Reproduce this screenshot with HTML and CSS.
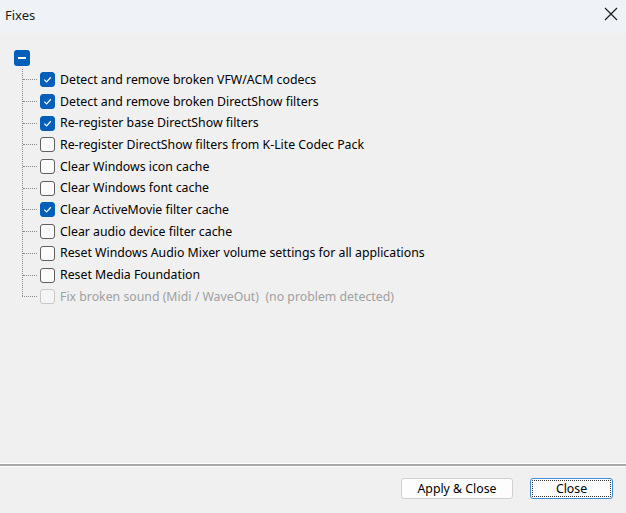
FILE: index.html
```html
<!DOCTYPE html>
<html>
<head>
<meta charset="utf-8">
<link rel="stylesheet" href="styles.css">
</head>
<body>
<div class="window">
  <div class="titlebar">
    <span class="title">Fixes</span>
    <span class="close-x">
      <svg width="14" height="14" viewBox="0 0 14 14"><path d="M1 1 L13 13 M13 1 L1 13" stroke="#1a1a1a" stroke-width="1.2" fill="none"/></svg>
    </span>
  </div>
  <div class="content">
    <div class="tree">
      <div class="root-row"><span class="root-box"><span class="minus"></span></span></div>
      <div class="children">
        <div class="row"><span class="branch"></span><span class="cb checked"><svg viewBox="0 0 14 14"><path d="M3.5 7.2 L6 9.6 L10.6 4.6" stroke="#fff" stroke-width="1.3" fill="none"/></svg></span><span class="label">Detect and remove broken VFW/ACM codecs</span></div>
        <div class="row"><span class="branch"></span><span class="cb checked"><svg viewBox="0 0 14 14"><path d="M3.5 7.2 L6 9.6 L10.6 4.6" stroke="#fff" stroke-width="1.3" fill="none"/></svg></span><span class="label">Detect and remove broken DirectShow filters</span></div>
        <div class="row"><span class="branch"></span><span class="cb checked"><svg viewBox="0 0 14 14"><path d="M3.5 7.2 L6 9.6 L10.6 4.6" stroke="#fff" stroke-width="1.3" fill="none"/></svg></span><span class="label">Re-register base DirectShow filters</span></div>
        <div class="row"><span class="branch"></span><span class="cb"></span><span class="label">Re-register DirectShow filters from K-Lite Codec Pack</span></div>
        <div class="row"><span class="branch"></span><span class="cb"></span><span class="label">Clear Windows icon cache</span></div>
        <div class="row"><span class="branch"></span><span class="cb"></span><span class="label">Clear Windows font cache</span></div>
        <div class="row"><span class="branch"></span><span class="cb checked"><svg viewBox="0 0 14 14"><path d="M3.5 7.2 L6 9.6 L10.6 4.6" stroke="#fff" stroke-width="1.3" fill="none"/></svg></span><span class="label">Clear ActiveMovie filter cache</span></div>
        <div class="row"><span class="branch"></span><span class="cb"></span><span class="label">Clear audio device filter cache</span></div>
        <div class="row"><span class="branch"></span><span class="cb"></span><span class="label">Reset Windows Audio Mixer volume settings for all applications</span></div>
        <div class="row"><span class="branch"></span><span class="cb"></span><span class="label">Reset Media Foundation</span></div>
        <div class="row last disabled"><span class="branch"></span><span class="cb"></span><span class="label">Fix broken sound (Midi / WaveOut)&nbsp;&nbsp;(no problem detected)</span></div>
      </div>
    </div>
  </div>
  <div class="separator"></div>
  <div class="footer">
    <button class="btn apply">Apply &amp; Close</button>
    <button class="btn close focused"><span class="focus-rect">Close</span></button>
  </div>
</div>
</body>
</html>
```

FILE: styles.css
```css
* { box-sizing: border-box; }
html, body {
  margin: 0;
  padding: 0;
  width: 626px;
  height: 513px;
  overflow: hidden;
  background: #f0f0f0;
  font-family: "Noto Sans", "Open Sans", sans-serif;
  font-size: 12.3px;
  color: #000;
}
.window {
  width: 626px;
  height: 513px;
  display: flex;
  flex-direction: column;
}
.titlebar {
  height: 33px;
  flex: none;
  background: #eff3f8;
  display: flex;
  align-items: center;
  justify-content: space-between;
  padding: 0 8px 0 5px;
}
.title {
  font-size: 13px;
  color: #1a1a1a;
  margin-top: -4px;
}
.close-x {
  display: flex;
  width: 14px;
  height: 14px;
  margin-top: -6px;
}
.content {
  flex: 1;
  padding: 14px 0 0 14px;
}
.root-row {
  height: 22px;
  display: flex;
  align-items: center;
}
.root-box {
  width: 16px;
  height: 16px;
  border-radius: 3px;
  background: #005fb8;
  display: flex;
  align-items: center;
  justify-content: center;
}
.minus {
  width: 8px;
  height: 2px;
  background: #fff;
}
.children {
  position: relative;
  margin-left: 8px;
  border-left: 1px dotted #8a8a8a;
  width: 600px;
}
.children::after {
  content: "";
  position: absolute;
  left: -1px;
  bottom: 0;
  width: 1px;
  height: 11px;
  background: #f0f0f0;
}
.row {
  height: 21.7px;
  display: flex;
  align-items: center;
}
.row.last { position: relative; z-index: 1; }
.branch {
  width: 14px;
  height: 0;
  border-top: 1px dotted #8a8a8a;
  margin-right: 3px;
  flex: none;
}
.row.last .branch { margin-left: -1px; width: 15px; }
.cb {
  width: 15px;
  height: 15px;
  border: 1px solid #5f5f5f;
  border-radius: 3px;
  background: #fbfbfb;
  flex: none;
  display: flex;
}
.cb.checked {
  background: #005fb8;
  border-color: #005fb8;
}
.cb svg { width: 13px; height: 13px; }
.label {
  margin-left: 5px;
  white-space: nowrap;
  line-height: 16px;
}
.row.disabled .cb {
  border-color: #c8c8c8;
  background: #f5f5f5;
}
.row.disabled .label { color: #a0a0a0; }
.separator {
  flex: none;
  height: 4px;
  border-top: 1px solid #ffffff;
  background: #a8a8a8;
  border-bottom: 1px solid #ffffff;
  margin-bottom: 11px;
}
.footer {
  flex: none;
  height: 35px;
  display: flex;
  justify-content: flex-end;
  align-items: flex-start;
  padding: 0 13px 0 0;
  gap: 17px;
}
.btn {
  font-family: inherit;
  font-size: 12.3px;
  height: 21px;
  background: #fdfdfd;
  border: 1px solid #d0d0d0;
  border-radius: 3px;
  padding: 0;
  color: #000;
  display: flex;
  align-items: center;
  justify-content: center;
}
.btn.apply { width: 112px; }
.btn.close {
  width: 83px;
  border: 1px solid #3b8ed8;
  padding: 1px;
}
.focus-rect {
  flex: 1;
  height: 100%;
  border: 1px dotted #333;
  border-radius: 1px;
  display: flex;
  align-items: center;
  justify-content: center;
}
```
